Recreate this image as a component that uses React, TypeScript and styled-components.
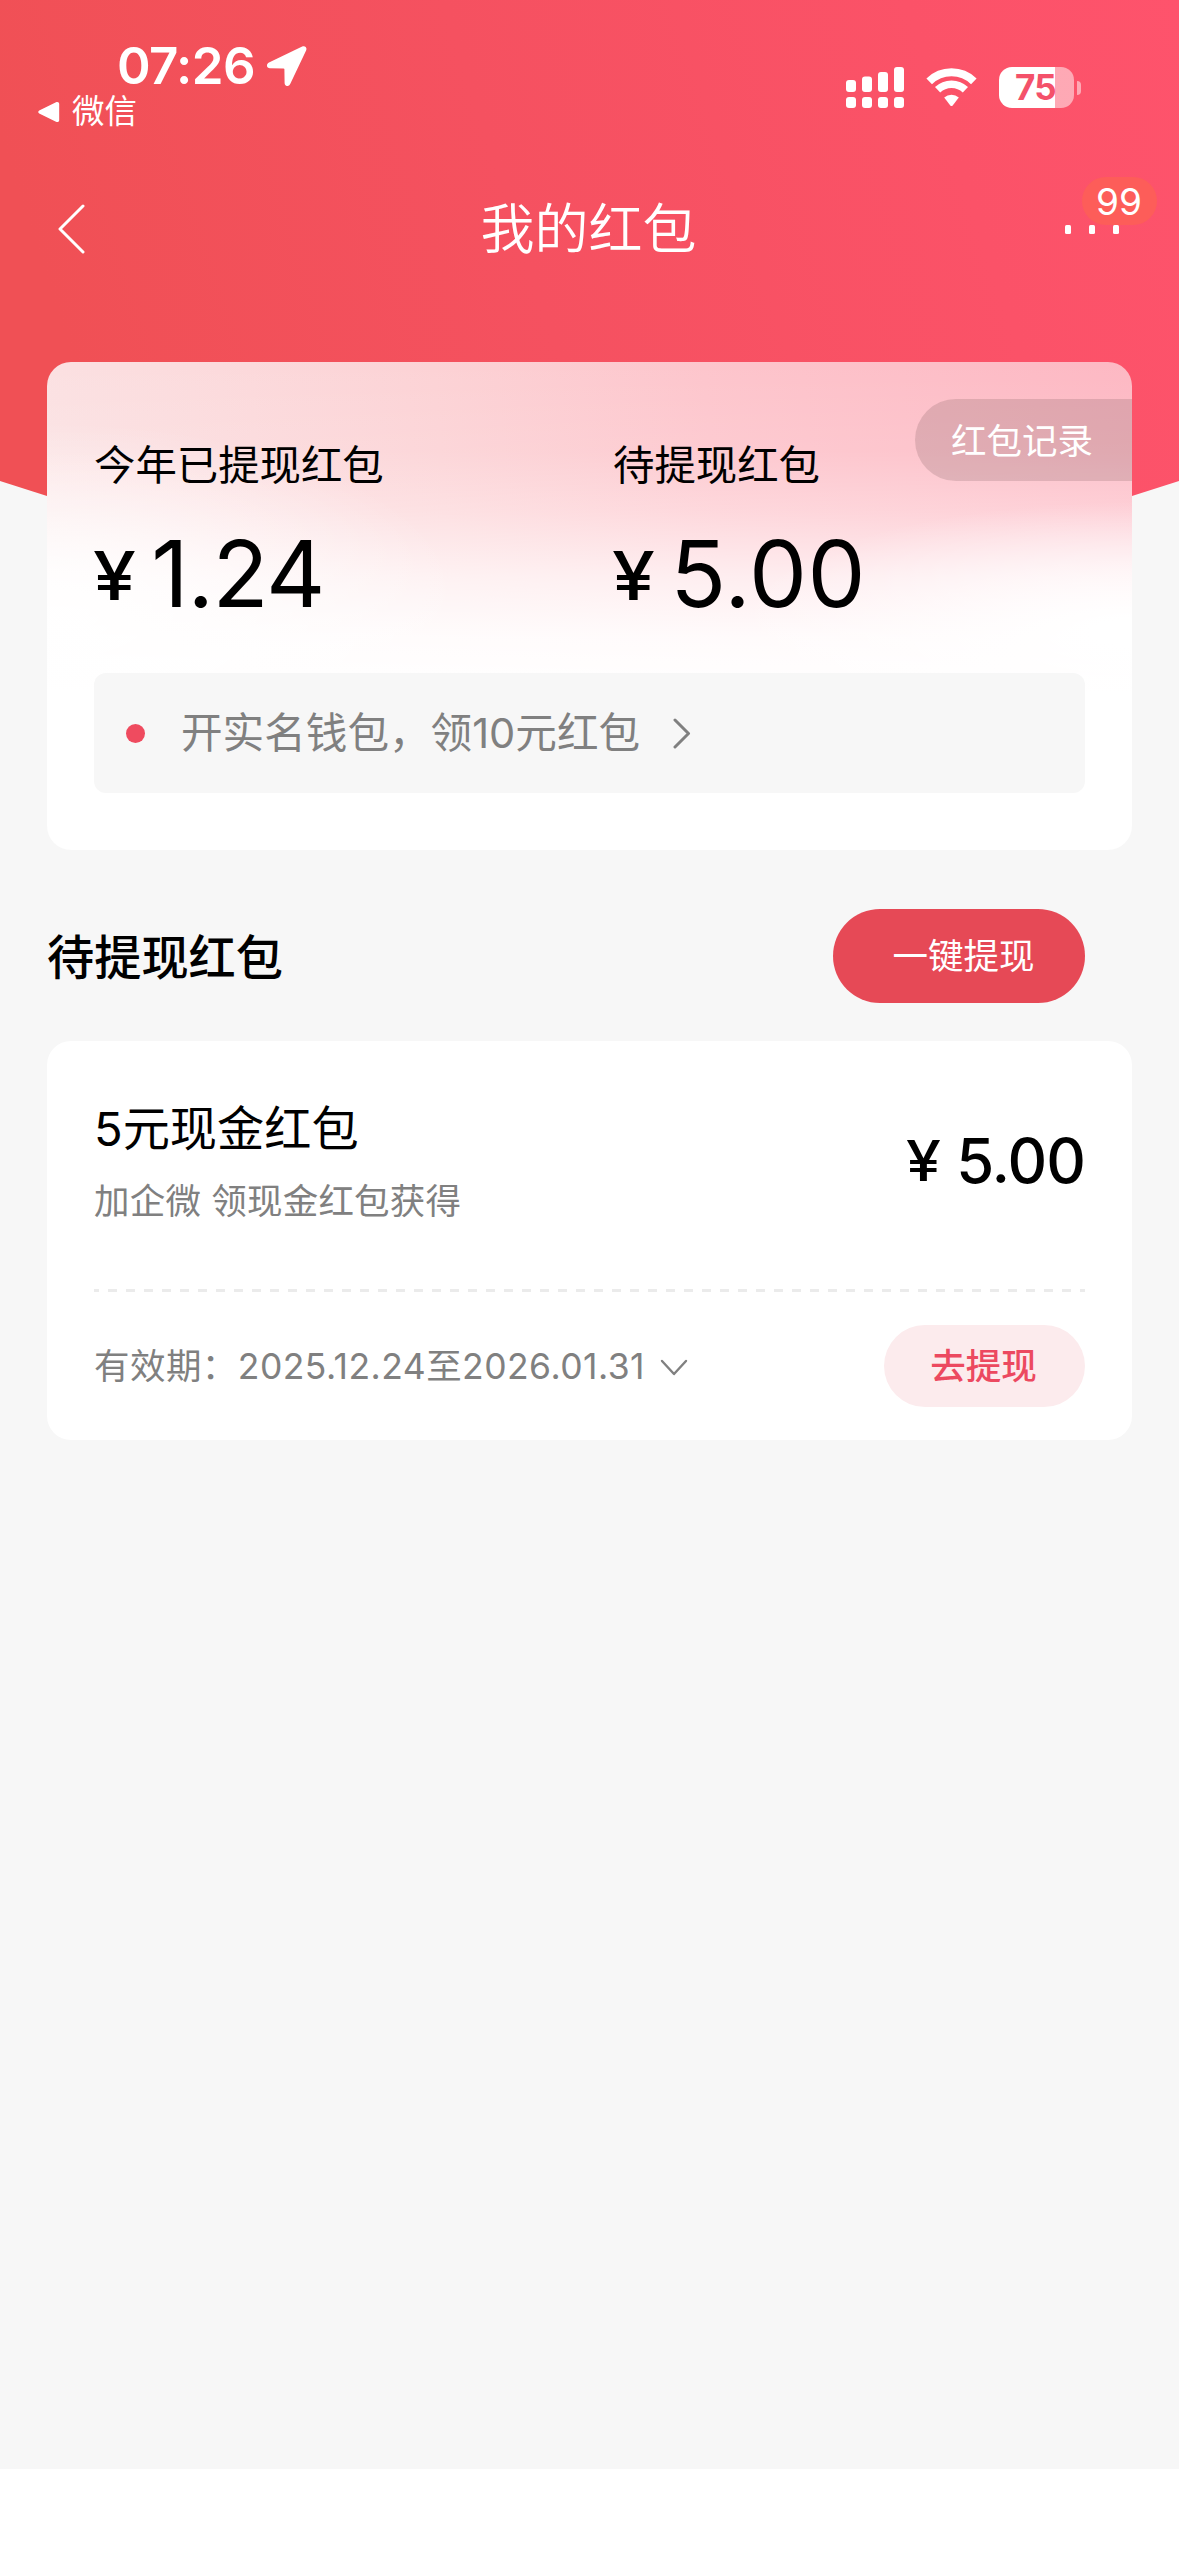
import React from "react";
import styled, { createGlobalStyle } from "styled-components";

const GlobalStyle = createGlobalStyle`
  * { box-sizing: border-box; margin: 0; padding: 0; }
  body {
    background: #fff;
    font-family: Inter, "Noto Sans CJK SC", sans-serif;
    color: #000;
  }
  button { border: 0; background: none; font: inherit; color: inherit; }
`;

const Page = styled.div`
  width: 1179px;
  height: 2556px;
  background: #fff;
  overflow: hidden;
`;

const Content = styled.main`
  position: relative;
  isolation: isolate;
  height: 2469px;
  background: #f7f7f7;
`;

const Backdrop = styled.div`
  position: absolute;
  z-index: -1;
  inset: 0 0 auto 0;
  height: 560px;
  background: linear-gradient(72deg, #f05055 10%, #f55160 46%, #fb5268 80%, #fe536c 100%);
  clip-path: polygon(0 0, 100% 0, 100% 481px, 1132px 496px, 940px 545px, 240px 545px, 47px 496px, 0 481px);
`;

const StatusBar = styled.header`
  display: flex;
  justify-content: space-between;
  height: 150px;
  padding: 35px 98px 0 38px;
  color: #fff;
`;

const StatusLeft = styled.div`
  display: flex;
  flex-direction: column;
`;

const Clock = styled.div`
  display: flex;
  align-items: center;
  gap: 12px;
  height: 61px;
  padding-left: 79px;
  font-size: 51px;
  font-weight: 600;
  line-height: 61px;
  letter-spacing: -0.6px;
`;

const BackToApp = styled.div`
  display: flex;
  align-items: center;
  gap: 12px;
  height: 32px;
  font-size: 32.5px;
  line-height: 32px;
`;

const StatusRight = styled.div`
  display: flex;
  align-items: flex-start;
  padding-top: 32px;
  gap: 22px;
`;

const Battery = styled.div`
  display: flex;
  align-items: center;
  gap: 3px;
`;

const BatteryBody = styled.div<{ $level: number }>`
  display: flex;
  align-items: center;
  justify-content: center;
  width: 75px;
  height: 41px;
  border-radius: 13px;
  background: linear-gradient(90deg, #fff ${(p) => p.$level}%, rgba(255, 255, 255, 0.5) ${(p) => p.$level}%);
  color: #f4516a;
  font-size: 35px;
  font-weight: 700;
  line-height: 41px;
  letter-spacing: -0.8px;
  padding-right: 2px;
`;

const BatteryCap = styled.div`
  width: 4px;
  height: 14px;
  border-radius: 0 5px 5px 0;
  background: rgba(255, 255, 255, 0.5);
`;

const NavBar = styled.nav`
  display: grid;
  grid-template-columns: 120px 1fr 120px;
  align-items: center;
  height: 158px;
  color: #fff;
`;

const BackButton = styled.button`
  display: flex;
  padding-left: 58px;
`;

const NavTitle = styled.h1`
  padding: 1px 2px 0 0;
  text-align: center;
  font-size: 54px;
  font-weight: 350;
  line-height: 60px;
`;

const MoreButton = styled.button`
  position: relative;
  display: flex;
  gap: 18px;
  padding-left: 6px;
`;

const MoreDot = styled.i`
  width: 6px;
  height: 9px;
  border-radius: 1.5px;
  background: #fff;
`;

const Badge = styled.span`
  position: absolute;
  z-index: -1;
  left: 23px;
  bottom: 9px;
  width: 75px;
  height: 48px;
  border-radius: 24px;
  background: #fd5d59;
  font-size: 37px;
  font-weight: 400;
  line-height: 49px;
  padding-right: 1px;
  text-align: center;
`;

const Summary = styled.section`
  position: relative;
  height: 488px;
  margin: 54px 47px 0;
  padding: 76px 47px 0;
  border-radius: 24px;
  overflow: hidden;
  background:
    radial-gradient(ellipse 400px 130px at 100% 270px, #fff 10%, rgba(255, 255, 255, 0) 100%),
    radial-gradient(ellipse 420px 190px at 0 250px, rgba(255, 255, 255, 0.9) 10%, rgba(255, 255, 255, 0) 100%),
    linear-gradient(180deg, rgba(255, 255, 255, 0) 0, rgba(255, 255, 255, 0.1) 90px, rgba(255, 255, 255, 0.33) 150px, rgba(255, 255, 255, 0.7) 215px, rgba(255, 255, 255, 0.93) 275px, #fff 330px),
    linear-gradient(85deg, #fbe2e3 0, #fcd2d5 38%, #fdc5cc 62%, #fdb8c3 100%);
`;

const RecordButton = styled.button`
  position: absolute;
  top: 37px;
  right: 0;
  width: 217px;
  height: 82px;
  padding: 3px 3px 0 0;
  border-radius: 41px 0 0 41px;
  background: rgba(76, 50, 50, 0.16);
  color: #fff;
  font-size: 35.5px;
  line-height: 79px;
`;

const Totals = styled.div`
  display: grid;
  grid-template-columns: 519px 1fr;
`;

const TotalLabel = styled.div`
  font-size: 41.4px;
  line-height: 54px;
`;

const TotalAmount = styled.div<{ $tracking: number }>`
  display: flex;
  align-items: baseline;
  margin-top: 26px;
  gap: 20px;
  font-size: 92px;
  line-height: 112px;
  letter-spacing: ${(p) => p.$tracking}px;
`;

const Currency = styled.span<{ $size: number; $lift: number; $stretch: number }>`
  font-size: ${(p) => p.$size}px;
  font-weight: 500;
  transform: translate(-1px, -${(p) => p.$lift}px) scaleX(${(p) => p.$stretch});
  transform-origin: 0 50%;
  letter-spacing: 0;
`;

const WalletTip = styled.a`
  display: flex;
  align-items: center;
  height: 120px;
  margin-top: 43px;
  margin-top: 34px;
  padding-left: 32px;
  border-radius: 12px;
  background: #f7f7f7;
  color: #808080;
  font-size: 41.6px;
`;

const TipDot = styled.i`
  width: 19px;
  height: 19px;
  margin-right: 36px;
  border-radius: 50%;
  background: #ef4b5f;
`;

const TipText = styled.span`
  margin-right: 33px;
  line-height: 60px;
`;

const SectionHead = styled.div`
  display: flex;
  align-items: center;
  justify-content: space-between;
  height: 94px;
  margin: 59px 94px 38px 47px;
`;

const SectionTitle = styled.h2`
  padding-top: 3px;
  font-size: 47.2px;
  font-weight: 500;
  line-height: 60px;
`;

const PillButton = styled.button<{ $w: number; $h: number; $bg: string; $fg: string; $weight: number; $indent: number }>`
  width: ${(p) => p.$w}px;
  height: ${(p) => p.$h}px;
  border-radius: ${(p) => p.$h / 2}px;
  background: ${(p) => p.$bg};
  color: ${(p) => p.$fg};
  font-size: 35.5px;
  font-weight: ${(p) => p.$weight};
  line-height: ${(p) => p.$h + 1}px;
  text-indent: ${(p) => p.$indent}px;
`;

const Packet = styled.article`
  height: 399px;
  margin: 0 47px;
  padding: 0 47px;
  border-radius: 24px;
  background: #fff;
`;

const PacketTop = styled.div`
  display: flex;
  justify-content: space-between;
  height: 248px;
  padding-top: 58px;
`;

const PacketName = styled.h3`
  font-size: 47.2px;
  font-weight: 400;
  line-height: 60px;
`;

const PacketSource = styled.p`
  margin-top: 18px;
  color: #808080;
  font-size: 35.5px;
  line-height: 50px;
  letter-spacing: 0.2px;
`;

const PacketAmount = styled.div`
  display: flex;
  align-items: baseline;
  gap: 18px;
  height: 76px;
  margin-top: 24px;
  font-size: 61.5px;
  font-weight: 500;
  line-height: 76px;
  letter-spacing: -1px;
`;

const Divider = styled.div`
  height: 3px;
  background: repeating-linear-gradient(90deg, #ebebeb 0 9px, transparent 9px 18px) -4px 0;
`;

const PacketBottom = styled.div`
  display: flex;
  align-items: center;
  justify-content: space-between;
  height: 148px;
`;

const Validity = styled.div`
  display: flex;
  align-items: center;
  gap: 15px;
  padding-top: 1px;
  color: #808080;
  font-size: 35.5px;
  line-height: 50px;
  letter-spacing: 0.45px;

  svg {
    margin-top: 3px;
  }
`;

function LocationArrow() {
  return (
    <svg width="40" height="40" viewBox="0 0 40 40" fill="#fff">
      <path d="M35.2.5 2 16.6c-3.2 1.6-2.4 5.6.9 5.6l13.6.2c.6 0 .9.3.9.9l.2 13.8c0 3.4 4.1 4 5.6.9L39.1 4.4C40.4 1.6 38-.8 35.2.5Z" />
    </svg>
  );
}

function BackTriangle() {
  return (
    <svg width="22" height="22" viewBox="0 0 22 22" fill="#fff">
      <path d="M1.2 9.6 18 1.2c1.7-.8 3.2 0 3.2 1.8v16c0 1.8-1.5 2.6-3.2 1.8L1.2 12.4c-1.3-.7-1.3-2.1 0-2.8Z" />
    </svg>
  );
}

function SignalBars() {
  const tops = [13, 9.5, 5, 0];
  return (
    <svg width="58" height="41" viewBox="0 0 58 41" fill="#fff">
      {tops.map((top, i) => (
        <g key={i}>
          <rect x={i * 16} y={top} width="10" height={25 - top} rx="3" />
          <rect x={i * 16} y="30" width="10" height="11" rx="3" />
        </g>
      ))}
    </svg>
  );
}

function Wifi() {
  return (
    <svg width="51" height="41" viewBox="0 0 51 41" fill="none" stroke="#fff">
      <path d="M3.2 14.3a32 32 0 0 1 44.6 0" strokeWidth="8" />
      <path d="M11.6 22.8a20 20 0 0 1 27.8 0" strokeWidth="7.5" />
      <path d="M18.2 30.6a10.8 10.8 0 0 1 14.6 0l-6.1 7.8a1.6 1.6 0 0 1-2.4 0Z" fill="#fff" stroke="none" />
    </svg>
  );
}

function Chevron({ w, h, d, color, stroke }: { w: number; h: number; d: string; color: string; stroke: number }) {
  return (
    <svg width={w} height={h} viewBox={`0 0 ${w} ${h}`} fill="none" stroke={color} strokeWidth={stroke} strokeLinecap="round" strokeLinejoin="round">
      <path d={d} />
    </svg>
  );
}

const totals = [
  { label: "今年已提现红包", amount: "1.24", tracking: -1.3 },
  { label: "待提现红包", amount: "5.00", tracking: 0.5 },
];

export default function App() {
  return (
    <Page>
      <GlobalStyle />
      <Content>
        <Backdrop />
        <StatusBar>
          <StatusLeft>
            <Clock>
              07:26
              <LocationArrow />
            </Clock>
            <BackToApp>
              <BackTriangle />
              微信
            </BackToApp>
          </StatusLeft>
          <StatusRight>
            <SignalBars />
            <Wifi />
            <Battery>
              <BatteryBody $level={75}>75</BatteryBody>
              <BatteryCap />
            </Battery>
          </StatusRight>
        </StatusBar>

        <NavBar>
          <BackButton aria-label="返回">
            <Chevron w={27} h={50} d="M25 2 2 25 25 48" color="#fff" stroke={3} />
          </BackButton>
          <NavTitle>我的红包</NavTitle>
          <MoreButton>
            <Badge>99</Badge>
            <MoreDot />
            <MoreDot />
            <MoreDot />
          </MoreButton>
        </NavBar>

        <Summary>
          <RecordButton>红包记录</RecordButton>
          <Totals>
            {totals.map((t) => (
              <div key={t.label}>
                <TotalLabel>{t.label}</TotalLabel>
                <TotalAmount $tracking={t.tracking}>
                  <Currency $size={67} $lift={7} $stretch={1.15}>¥</Currency>
                  {t.amount}
                </TotalAmount>
              </div>
            ))}
          </Totals>
          <WalletTip>
            <TipDot />
            <TipText>开实名钱包，领10元红包</TipText>
            <Chevron w={18} h={31} d="M2 2 15.5 15.5 2 29" color="#808080" stroke={3} />
          </WalletTip>
        </Summary>

        <SectionHead>
          <SectionTitle>待提现红包</SectionTitle>
          <PillButton $w={252} $h={94} $bg="#e64956" $fg="#fff" $weight={400} $indent={9}>一键提现</PillButton>
        </SectionHead>

        <Packet>
          <PacketTop>
            <div>
              <PacketName>5元现金红包</PacketName>
              <PacketSource>加企微 领现金红包获得</PacketSource>
            </div>
            <PacketAmount>
              <Currency $size={56} $lift={2} $stretch={1.12}>¥</Currency>
              5.00
            </PacketAmount>
          </PacketTop>
          <Divider />
          <PacketBottom>
            <Validity>
              有效期：2025.12.24至2026.01.31
              <Chevron w={28} h={18} d="M2 2 14 15 26 2" color="#808080" stroke={2.4} />
            </Validity>
            <PillButton $w={201} $h={82} $bg="#fcebed" $fg="#ec4960" $weight={500} $indent={-2}>去提现</PillButton>
          </PacketBottom>
        </Packet>
      </Content>
    </Page>
  );
}
